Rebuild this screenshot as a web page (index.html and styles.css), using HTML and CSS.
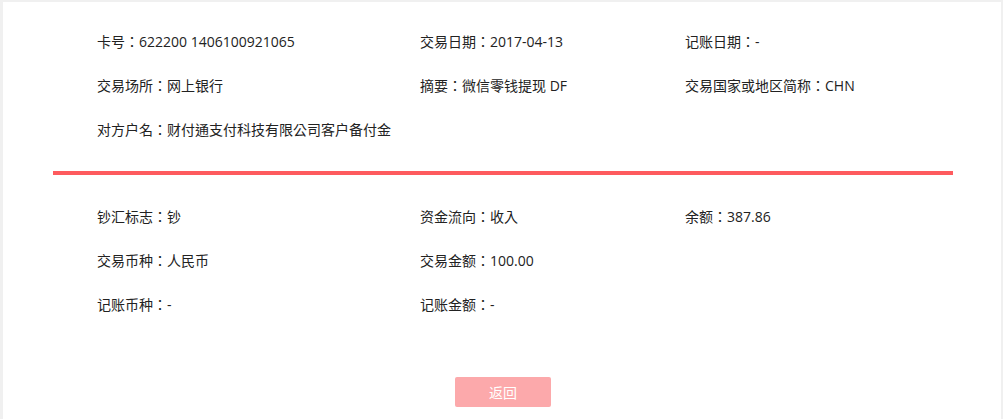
FILE: index.html
```html
<!DOCTYPE html>
<html lang="zh-CN">

<head>
    <meta charset="UTF-8">
    <meta name="viewport" content="width=device-width, initial-scale=1.0">
    <title>交易明细</title>
    <link rel="stylesheet" href="styles.css">
</head>

<body>
    <div class="panel">
        <div class="detail">
            <div class="infoGrid">
                <div class="item">卡号：622200 1406100921065</div>
                <div class="item">交易日期：2017-04-13</div>
                <div class="item">记账日期：-</div>
                <div class="item">交易场所：网上银行</div>
                <div class="item">摘要：微信零钱提现 DF</div>
                <div class="item">交易国家或地区简称：CHN</div>
                <div class="item">对方户名：财付通支付科技有限公司客户备付金</div>
            </div>
            <div class="divider"></div>
            <div class="infoGrid">
                <div class="item">钞汇标志：钞</div>
                <div class="item">资金流向：收入</div>
                <div class="item">余额：387.86</div>
                <div class="item">交易币种：人民币</div>
                <div class="item">交易金额：100.00</div>
                <div class="item"></div>
                <div class="item">记账币种：-</div>
                <div class="item">记账金额：-</div>
            </div>
        </div>
        <div class="btnRow">
            <button class="backBtn">返回</button>
        </div>
    </div>
</body>

</html>
```

FILE: styles.css
```css
* {
    box-sizing: border-box;
    padding: 0;
    margin: 0;
}

body {
    background-color: #f0f0f0;
    font-family: "Open Sans", "Noto Sans CJK TC", "Noto Sans CJK SC", sans-serif;
    font-feature-settings: "locl" 0;
    font-size: 14px;
    color: #222;
}

.panel {
    background-color: #fff;
    margin: 2px 2px 0 3px;
    height: 417px;
    padding: 0 48px 0 50px;
}

.infoGrid {
    display: grid;
    grid-template-columns: 323px 265px 1fr;
    padding: 0 44px;
}

.infoGrid:first-child {
    padding-top: 18px;
}

.item {
    height: 44px;
    line-height: 44px;
    white-space: nowrap;
}

.divider {
    height: 4px;
    background-color: #fe5b5e;
    margin: 19px 0 20px;
}

.btnRow {
    display: flex;
    justify-content: center;
    padding-top: 50px;
}

.backBtn {
    width: 96px;
    height: 30px;
    border: none;
    border-radius: 2px;
    background-color: #fca9ab;
    color: #fff;
    font-family: inherit;
    font-size: 14px;
    cursor: pointer;
}
```
